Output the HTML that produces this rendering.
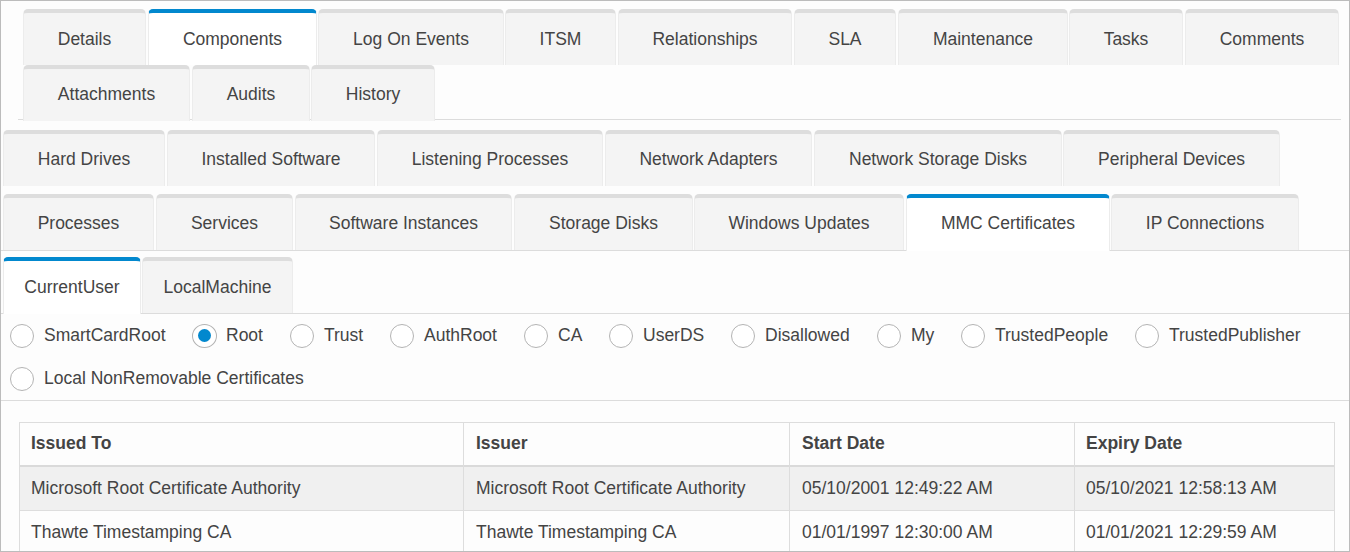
<!DOCTYPE html>
<html><head><meta charset="utf-8"><title>Components</title>
<style>
html,body{margin:0;padding:0;}
body{width:1350px;height:552px;overflow:hidden;position:relative;background:#fdfdfd;font-family:"Liberation Sans",sans-serif;font-size:17.5px;color:#444;}
.frame{position:absolute;left:0;top:0;width:1348px;height:550px;border:1px solid #bcbcbc;z-index:10;pointer-events:none;}
.tab{position:absolute;box-sizing:border-box;background:#f4f4f4;border:1px solid #ececec;border-top:4px solid #dddddd;border-bottom:none;border-radius:5px 5px 0 0;text-align:center;line-height:25px;white-space:nowrap;}
.tab span{position:relative;}
.tab.act{background:#fff;border-color:#ececec;border-top-color:#0288ce;z-index:3;}
.hl{position:absolute;height:1px;background:#dcdcdc;}
.hl.over{z-index:2;}
.rad{position:absolute;box-sizing:border-box;width:24px;height:24px;border:1px solid #b4b4b4;border-radius:50%;background:#fff;}
.rad.chk{width:25px;}
.rad.chk::after{content:"";position:absolute;left:4.75px;top:3.75px;width:13.5px;height:13.5px;border-radius:50%;background:#0288ce;}
.rl,.th,.td{position:absolute;line-height:25px;white-space:nowrap;}
.th{font-weight:bold;}
.tl{position:absolute;background:#dddddd;}
.tl.thick{background:#dadada;}
.stripe{position:absolute;background:#f0f0f0;}
</style></head><body>
<div class="hl" style="left:18px;top:119px;width:1323px"></div>
<div class="hl over" style="left:1px;top:250px;width:1348px"></div>
<div class="hl over" style="left:1px;top:313px;width:1348px"></div>
<div class="hl" style="left:1px;top:400px;width:1348px"></div>
<div class="tab" style="left:23px;top:9px;width:123px;height:56px"><span style="top:14px">Details</span></div>
<div class="tab act" style="left:148px;top:9px;width:169px;height:56px"><span style="top:14px">Components</span></div>
<div class="tab" style="left:318px;top:9px;width:186px;height:56px"><span style="top:14px">Log On Events</span></div>
<div class="tab" style="left:505px;top:9px;width:111px;height:56px"><span style="top:14px">ITSM</span></div>
<div class="tab" style="left:618px;top:9px;width:174px;height:56px"><span style="top:14px">Relationships</span></div>
<div class="tab" style="left:794px;top:9px;width:102px;height:56px"><span style="top:14px">SLA</span></div>
<div class="tab" style="left:898px;top:9px;width:170px;height:56px"><span style="top:14px">Maintenance</span></div>
<div class="tab" style="left:1069px;top:9px;width:114px;height:56px"><span style="top:14px">Tasks</span></div>
<div class="tab" style="left:1185px;top:9px;width:154px;height:56px"><span style="top:14px">Comments</span></div>
<div class="tab" style="left:23px;top:65px;width:167px;height:56px"><span style="top:13px">Attachments</span></div>
<div class="tab" style="left:192px;top:65px;width:118px;height:56px"><span style="top:13px">Audits</span></div>
<div class="tab" style="left:311px;top:65px;width:124px;height:56px"><span style="top:13px">History</span></div>
<div class="tab" style="left:3px;top:130px;width:162px;height:56px"><span style="top:13px">Hard Drives</span></div>
<div class="tab" style="left:167px;top:130px;width:208px;height:56px"><span style="top:13px">Installed Software</span></div>
<div class="tab" style="left:377px;top:130px;width:226px;height:56px"><span style="top:13px">Listening Processes</span></div>
<div class="tab" style="left:605px;top:130px;width:207px;height:56px"><span style="top:13px">Network Adapters</span></div>
<div class="tab" style="left:814px;top:130px;width:248px;height:56px"><span style="top:13px">Network Storage Disks</span></div>
<div class="tab" style="left:1063px;top:130px;width:217px;height:56px"><span style="top:13px">Peripheral Devices</span></div>
<div class="tab" style="left:3px;top:194px;width:151px;height:56px"><span style="top:13px">Processes</span></div>
<div class="tab" style="left:156px;top:194px;width:137px;height:56px"><span style="top:13px">Services</span></div>
<div class="tab" style="left:295px;top:194px;width:217px;height:56px"><span style="top:13px">Software Instances</span></div>
<div class="tab" style="left:514px;top:194px;width:179px;height:56px"><span style="top:13px">Storage Disks</span></div>
<div class="tab" style="left:694px;top:194px;width:210px;height:56px"><span style="top:13px">Windows Updates</span></div>
<div class="tab act" style="left:906px;top:194px;width:204px;height:57px"><span style="top:13px">MMC Certificates</span></div>
<div class="tab" style="left:1111px;top:194px;width:188px;height:56px"><span style="top:13px">IP Connections</span></div>
<div class="tab act" style="left:3px;top:257px;width:138px;height:57px"><span style="top:14px">CurrentUser</span></div>
<div class="tab" style="left:142px;top:257px;width:151px;height:56px"><span style="top:14px">LocalMachine</span></div>
<div class="rad" style="left:10px;top:324px"></div><div class="rl" style="left:44px;top:323px">SmartCardRoot</div>
<div class="rad chk" style="left:192px;top:324px"></div><div class="rl" style="left:226px;top:323px">Root</div>
<div class="rad" style="left:290px;top:324px"></div><div class="rl" style="left:324px;top:323px">Trust</div>
<div class="rad" style="left:390px;top:324px"></div><div class="rl" style="left:424px;top:323px">AuthRoot</div>
<div class="rad" style="left:524px;top:324px"></div><div class="rl" style="left:558px;top:323px">CA</div>
<div class="rad" style="left:609px;top:324px"></div><div class="rl" style="left:643px;top:323px">UserDS</div>
<div class="rad" style="left:731px;top:324px"></div><div class="rl" style="left:765px;top:323px">Disallowed</div>
<div class="rad" style="left:877px;top:324px"></div><div class="rl" style="left:911px;top:323px">My</div>
<div class="rad" style="left:961px;top:324px"></div><div class="rl" style="left:995px;top:323px">TrustedPeople</div>
<div class="rad" style="left:1135px;top:324px"></div><div class="rl" style="left:1169px;top:323px">TrustedPublisher</div>
<div class="rad" style="left:10px;top:367px"></div><div class="rl" style="left:44px;top:366px">Local NonRemovable Certificates</div>
<div class="stripe" style="left:20px;top:467px;width:1314px;height:43px"></div>
<div class="tl" style="left:19px;top:422px;width:1316px;height:1px"></div>
<div class="tl thick" style="left:19px;top:465px;width:1316px;height:2px"></div>
<div class="tl" style="left:19px;top:510px;width:1316px;height:1px"></div>
<div class="tl" style="left:19px;top:422px;width:1px;height:130px"></div>
<div class="tl" style="left:463px;top:422px;width:1px;height:130px"></div>
<div class="tl" style="left:789px;top:422px;width:1px;height:130px"></div>
<div class="tl" style="left:1074px;top:422px;width:1px;height:130px"></div>
<div class="tl" style="left:1334px;top:422px;width:1px;height:130px"></div>
<div class="th" style="left:31px;top:431px">Issued To</div>
<div class="th" style="left:476px;top:431px">Issuer</div>
<div class="th" style="left:802px;top:431px">Start Date</div>
<div class="th" style="left:1086px;top:431px">Expiry Date</div>
<div class="td" style="left:31px;top:476px">Microsoft Root Certificate Authority</div>
<div class="td" style="left:476px;top:476px">Microsoft Root Certificate Authority</div>
<div class="td" style="left:802px;top:476px">05/10/2001 12:49:22 AM</div>
<div class="td" style="left:1086px;top:476px">05/10/2021 12:58:13 AM</div>
<div class="td" style="left:31px;top:520px">Thawte Timestamping CA</div>
<div class="td" style="left:476px;top:520px">Thawte Timestamping CA</div>
<div class="td" style="left:802px;top:520px">01/01/1997 12:30:00 AM</div>
<div class="td" style="left:1086px;top:520px">01/01/2021 12:29:59 AM</div>
<div class="frame"></div>
</body></html>
